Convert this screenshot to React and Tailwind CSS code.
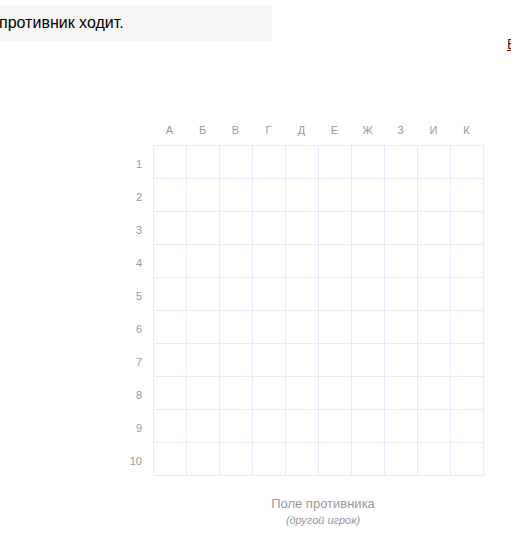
import React from "react";

const cols = ["А", "Б", "В", "Г", "Д", "Е", "Ж", "З", "И", "К"];
const rows = [1, 2, 3, 4, 5, 6, 7, 8, 9, 10];

export default function App() {
  return (
    <div className="w-[511px] h-[540px] overflow-hidden bg-white" style={{ fontFamily: '"Liberation Sans", Arial, sans-serif' }}>
      <div className="pt-[5px]">
        <div className="w-[272px] h-[36px] bg-[#f7f7f7] flex items-center text-[16px] text-black">
          <span className="whitespace-nowrap -ml-[1px]">противник ходит.</span>
        </div>
      </div>
      <div className="h-[14px] relative">
        <a className="absolute left-[507px] top-[-5px] text-[14px] text-[#8b0000] underline whitespace-nowrap leading-[16px]" href="#">Выход</a>
      </div>
      <div className="mt-[63px] flex">
        <div className="ml-[123px] flex flex-col">
          <div className="flex h-[27px]">
            <div className="w-[30px]" />
            {cols.map((c) => (
              <div key={c} className="w-[33px] text-center text-[11px] text-[#999] leading-[12px] pt-[6px]">{c}</div>
            ))}
          </div>
          <div className="flex">
            <div className="w-[30px] flex flex-col">
              {rows.map((r) => (
                <div key={r} className="h-[33px] flex items-center justify-end pr-[11px] pt-[5px] text-[11px] text-[#999]">{r}</div>
              ))}
            </div>
            <div className="w-[331px] border-r border-b border-[#ece8fb] flex flex-col">
              {rows.map((r) => (
                <div key={r} className="flex">
                  {cols.map((c) => (
                    <div key={c} className="w-[33px] h-[33px] border-l border-t border-[#ece8fb]" />
                  ))}
                </div>
              ))}
            </div>
          </div>
        </div>
      </div>
      <div className="w-[511px] flex flex-col items-center pl-[135px] mt-[20px]">
        <div className="text-[13px] text-[#999] leading-[15px]">Поле противника</div>
        <div className="text-[11px] italic text-[#999] leading-[14px] mt-[2px]">(другой игрок)</div>
      </div>
    </div>
  );
}
